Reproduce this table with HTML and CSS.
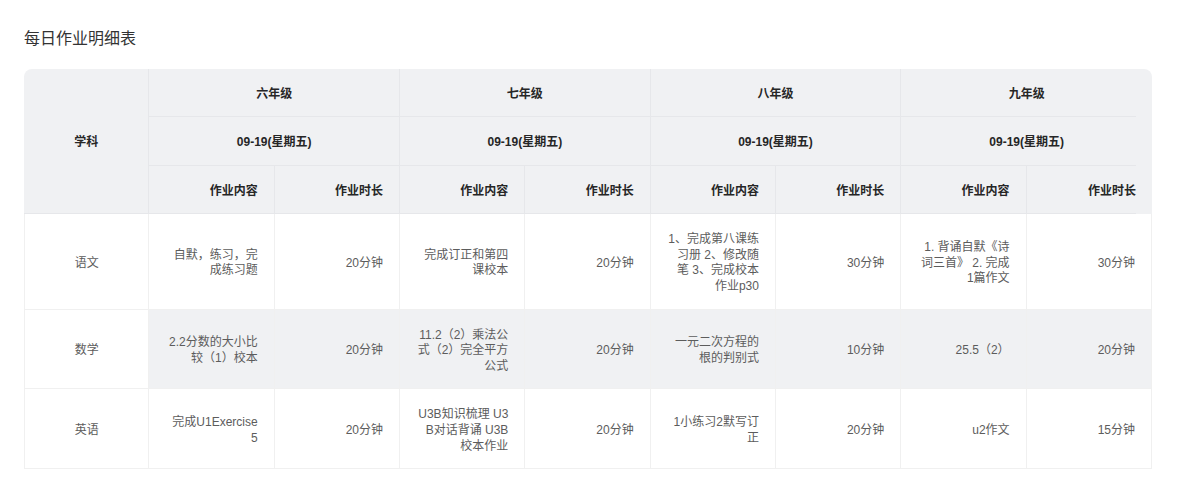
FILE: index.html
```html
<!DOCTYPE html>
<html lang="zh-CN">
<head>
<meta charset="utf-8">
<title>每日作业明细表</title>
<link rel="stylesheet" href="styles.css">
</head>
<body>
<div class="page">
  <h1 class="title">每日作业明细表</h1>
  <div class="table-wrap">
    <table class="grid">
      <colgroup>
        <col><col><col><col><col><col><col><col><col>
      </colgroup>
      <thead>
        <tr>
          <th class="subject-head" rowspan="3">学科</th>
          <th class="center" colspan="2">六年级</th>
          <th class="center" colspan="2">七年级</th>
          <th class="center" colspan="2">八年级</th>
          <th class="center last" colspan="2">九年级</th>
        </tr>
        <tr>
          <th class="center" colspan="2">09-19(星期五)</th>
          <th class="center" colspan="2">09-19(星期五)</th>
          <th class="center" colspan="2">09-19(星期五)</th>
          <th class="center last" colspan="2">09-19(星期五)</th>
        </tr>
        <tr>
          <th>作业内容</th><th>作业时长</th>
          <th>作业内容</th><th>作业时长</th>
          <th>作业内容</th><th>作业时长</th>
          <th>作业内容</th><th class="last">作业时长</th>
        </tr>
      </thead>
      <tbody>
        <tr>
          <td class="subject">语文</td>
          <td>自默，练习，完成练习题</td><td>20分钟</td>
          <td>完成订正和第四课校本</td><td>20分钟</td>
          <td>1、完成第八课练习册 2、修改随笔 3、完成校本作业p30</td><td>30分钟</td>
          <td>1. 背诵自默《诗词三首》 2. 完成1篇作文</td><td>30分钟</td>
        </tr>
        <tr class="is-hover">
          <td class="subject">数学</td>
          <td>2.2分数的大小比较（1）校本</td><td>20分钟</td>
          <td>11.2（2）乘法公式（2）完全平方公式</td><td>20分钟</td>
          <td>一元二次方程的根的判别式</td><td>10分钟</td>
          <td>25.5（2）</td><td>20分钟</td>
        </tr>
        <tr>
          <td class="subject">英语</td>
          <td>完成U1Exercise 5</td><td>20分钟</td>
          <td>U3B知识梳理 U3B对话背诵 U3B校本作业</td><td>20分钟</td>
          <td>1小练习2默写订正</td><td>20分钟</td>
          <td>u2作文</td><td>15分钟</td>
        </tr>
      </tbody>
    </table>
  </div>
</div>
</body>
</html>
```

FILE: styles.css
```css
* { box-sizing: border-box; }

html, body {
  margin: 0;
  padding: 0;
  background: #ffffff;
  font-family: "Liberation Sans", Arial, "Noto Sans CJK SC", sans-serif;
}

.page {
  padding: 27px 25px 24px 24px;
}

.title {
  margin: 0 0 18px 0;
  font-size: 16px;
  line-height: 24px;
  font-weight: 400;
  color: #333333;
}

.table-wrap {
  border-radius: 8px 8px 0 0;
  overflow: hidden;
  width: 1128px;
}

.grid {
  width: 1128px;
  table-layout: fixed;
  border-collapse: separate;
  border-spacing: 0;
  font-size: 12px;
  line-height: 15.4px;
}

.grid th,
.grid td {
  padding: 18px 16px 14px 16px;
  text-align: right;
  vertical-align: middle;
  word-break: break-all;
}

.grid th {
  background: #f0f1f3;
  color: #262626;
  font-weight: 700;
  border-right: 1px solid #e6e7ea;
  border-bottom: 1px solid #e6e7ea;
}

.grid th.center,
.grid th.subject-head {
  text-align: center;
}

.grid th.last {
  border-right: none;
  border-bottom: none;
  background:
    linear-gradient(#e6e7ea, #e6e7ea) no-repeat left bottom / calc(100% - 16px) 1px,
    #f0f1f3;
  padding-bottom: 15px;
}

.grid td {
  line-height: 15.6px;
  padding-top: 18px;
  padding-bottom: 14px;
  color: #5c5c5c;
  background: #ffffff;
  border-right: 1px solid #f0f0f0;
  border-bottom: 1px solid #f0f0f0;
}

.grid td.subject {
  text-align: center;
  border-left: 1px solid #f0f0f0;
}

.grid tr.is-hover td {
  background: #f0f1f3;
}

.grid tr.is-hover td.subject {
  background: #ffffff;
}
```
